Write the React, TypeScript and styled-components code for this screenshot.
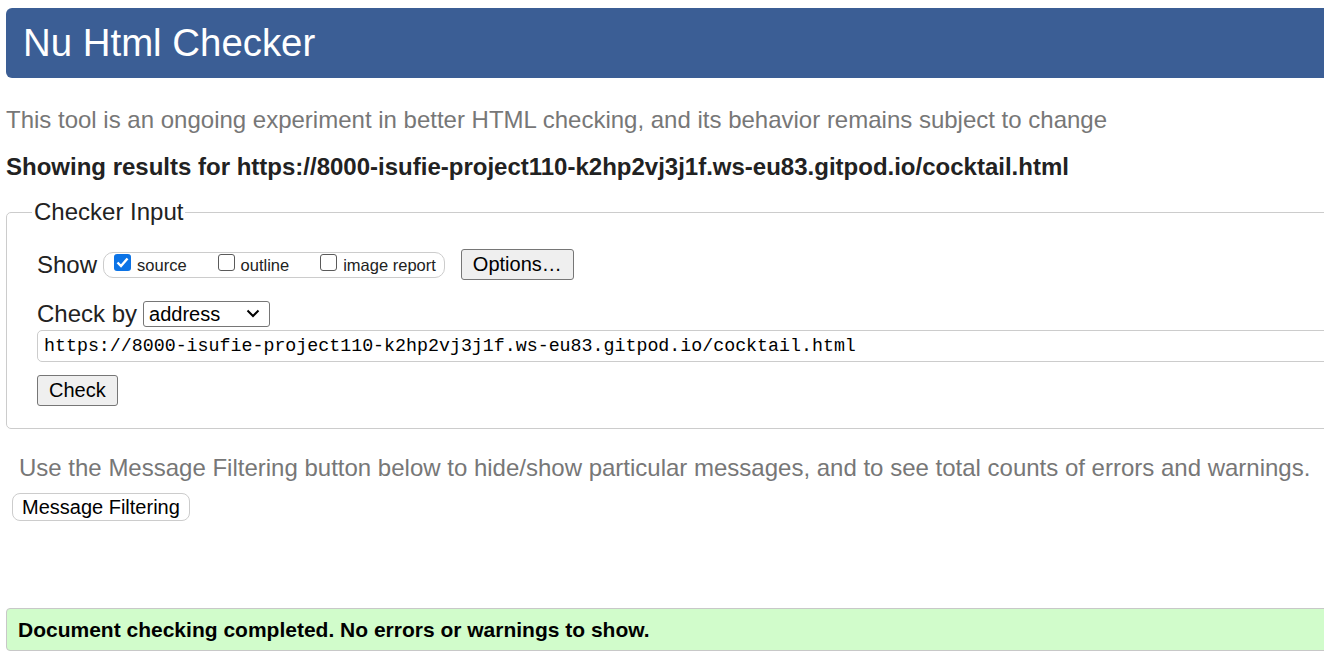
import React from "react";
import styled, { createGlobalStyle } from "styled-components";

const Global = createGlobalStyle`
  html, body { margin: 0; padding: 0; background: #fff; overflow: hidden; }
  body { font-family: Arial, "Liberation Sans", sans-serif; color: #222; }
  * { box-sizing: border-box; }
`;

const Page = styled.main`
  width: 1360px;
  padding: 8px 0 0 6px;
  display: flex;
  flex-direction: column;
`;

const Header = styled.header`
  height: 70px;
  background: #3b5e95;
  border-radius: 6px;
  display: flex;
  align-items: center;
  padding-left: 17px;
`;

const Title = styled.h1`
  margin: 0;
  font-weight: normal;
  font-size: 38.4px;
  color: #fff;
  line-height: 1;
`;

const Intro = styled.p`
  margin: 28px 0 0;
  font-size: 24px;
  line-height: 28px;
  color: #777;
`;

const Results = styled.p`
  margin: 19px 0 0;
  font-size: 24px;
  line-height: 28px;
  font-weight: bold;
  color: #222;
`;

const Fieldset = styled.fieldset`
  margin: 17px 0 0;
  border: 1px solid #ccc;
  border-radius: 5px;
  padding: 0 0 22px 30px;
  display: flex;
  flex-direction: column;
  min-width: 0;
`;

const Legend = styled.legend`
  font-size: 24px;
  line-height: 28px;
  padding: 0 2px;
  margin-left: -5px;
  color: #222;
`;

const Row = styled.div<{ $mt: number }>`
  display: flex;
  align-items: center;
  margin-top: ${(p) => p.$mt}px;
`;

const Label = styled.span`
  font-size: 24px;
  color: #222;
  margin-right: 6px;
`;

const CheckGroup = styled.div`
  display: flex;
  align-items: center;
  height: 26px;
  border: 1px solid #ccc;
  border-radius: 10px;
  padding: 0 8px 0 10px;
  gap: 31px;
`;

const CheckLabel = styled.label`
  display: flex;
  align-items: center;
  font-size: 16.5px;
  color: #222;
  gap: 6px;
  padding-top: 2px;
`;

const Tick = styled.span<{ $on?: boolean }>`
  width: 17px;
  height: 17px;
  margin-bottom: 6px;
  border-radius: 3px;
  border: ${(p) => (p.$on ? "none" : "1.5px solid #5a5a5a")};
  background: ${(p) => (p.$on ? "#0b73e6" : "#fff")};
  display: flex;
  align-items: center;
  justify-content: center;
`;

const GreyButton = styled.button`
  font-family: Arial, "Liberation Sans", sans-serif;
  font-size: 20px;
  color: #000;
  background: #efefef;
  border: 1px solid #767676;
  border-radius: 3px;
  height: 31px;
  padding: 0 11px;
`;

const OptionsButton = styled(GreyButton)`
  margin-left: 16px;
`;

const SelectWrap = styled.div`
  position: relative;
  width: 127px;
  height: 26px;
`;

const Select = styled.select`
  appearance: none;
  width: 100%;
  height: 100%;
  font-family: Arial, "Liberation Sans", sans-serif;
  font-size: 20px;
  color: #000;
  background: #fff;
  border: 1px solid #767676;
  border-radius: 3px;
  padding: 0 0 0 5px;
`;

const Chevron = styled.svg`
  position: absolute;
  right: 10px;
  top: 8px;
  pointer-events: none;
`;

const UrlInput = styled.input`
  margin-top: 2px;
  height: 32px;
  border: 1px solid #ccc;
  border-radius: 5px;
  font-family: "Liberation Mono", "DejaVu Sans Mono", monospace;
  font-size: 18.3px;
  color: #000;
  padding: 0 0 0 6px;
`;

const CheckButton = styled(GreyButton)`
  align-self: flex-start;
  margin-top: 13px;
`;

const Filter = styled.p`
  margin: 25px 0 0 13px;
  font-size: 24px;
  line-height: 28px;
  color: #777;
`;

const FilterButton = styled.button`
  align-self: flex-start;
  margin: 11px 0 0 6px;
  height: 28px;
  padding: 0 9px;
  font-family: Arial, "Liberation Sans", sans-serif;
  font-size: 20px;
  color: #000;
  background: #fff;
  border: 1px solid #ccc;
  border-radius: 8px;
`;

const Success = styled.div`
  margin-top: 87px;
  height: 43px;
  display: flex;
  align-items: center;
  padding-left: 11px;
  background: #d1fccb;
  border: 1px solid #c8c8c8;
  border-radius: 4px;
  font-size: 21px;
  font-weight: bold;
  color: #000;
`;

const url = "https://8000-isufie-project110-k2hp2vj3j1f.ws-eu83.gitpod.io/cocktail.html";

function CheckItem({ label, checked }: { label: string; checked?: boolean }) {
  return (
    <CheckLabel>
      <Tick $on={checked} role="checkbox" aria-checked={!!checked}>
        {checked && (
          <svg width="13" height="11" viewBox="0 0 13 11">
            <path d="M1.5 5.5 L5 9 L11.5 1.5" fill="none" stroke="#fff" strokeWidth="2.4" />
          </svg>
        )}
      </Tick>
      {label}
    </CheckLabel>
  );
}

export default function App() {
  return (
    <>
      <Global />
      <Page>
        <Header>
          <Title>Nu Html Checker</Title>
        </Header>
        <Intro>
          This tool is an ongoing experiment in better HTML checking, and its behavior remains subject to change
        </Intro>
        <Results>Showing results for {url}</Results>
        <Fieldset>
          <Legend>Checker Input</Legend>
          <Row $mt={23}>
            <Label>Show</Label>
            <CheckGroup>
              <CheckItem label="source" checked />
              <CheckItem label="outline" />
              <CheckItem label="image report" />
            </CheckGroup>
            <OptionsButton>Options…</OptionsButton>
          </Row>
          <Row $mt={20}>
            <Label>Check by</Label>
            <SelectWrap>
              <Select defaultValue="address">
                <option value="address">address</option>
                <option value="file">file upload</option>
                <option value="text">text input</option>
              </Select>
              <Chevron width="14" height="9" viewBox="0 0 14 9">
                <path d="M1.5 1.5 L7 7 L12.5 1.5" fill="none" stroke="#000" strokeWidth="2" />
              </Chevron>
            </SelectWrap>
          </Row>
          <UrlInput defaultValue={url} />
          <CheckButton>Check</CheckButton>
        </Fieldset>
        <Filter>
          Use the Message Filtering button below to hide/show particular messages, and to see total counts of errors and warnings.
        </Filter>
        <FilterButton>Message Filtering</FilterButton>
        <Success>Document checking completed. No errors or warnings to show.</Success>
      </Page>
    </>
  );
}
